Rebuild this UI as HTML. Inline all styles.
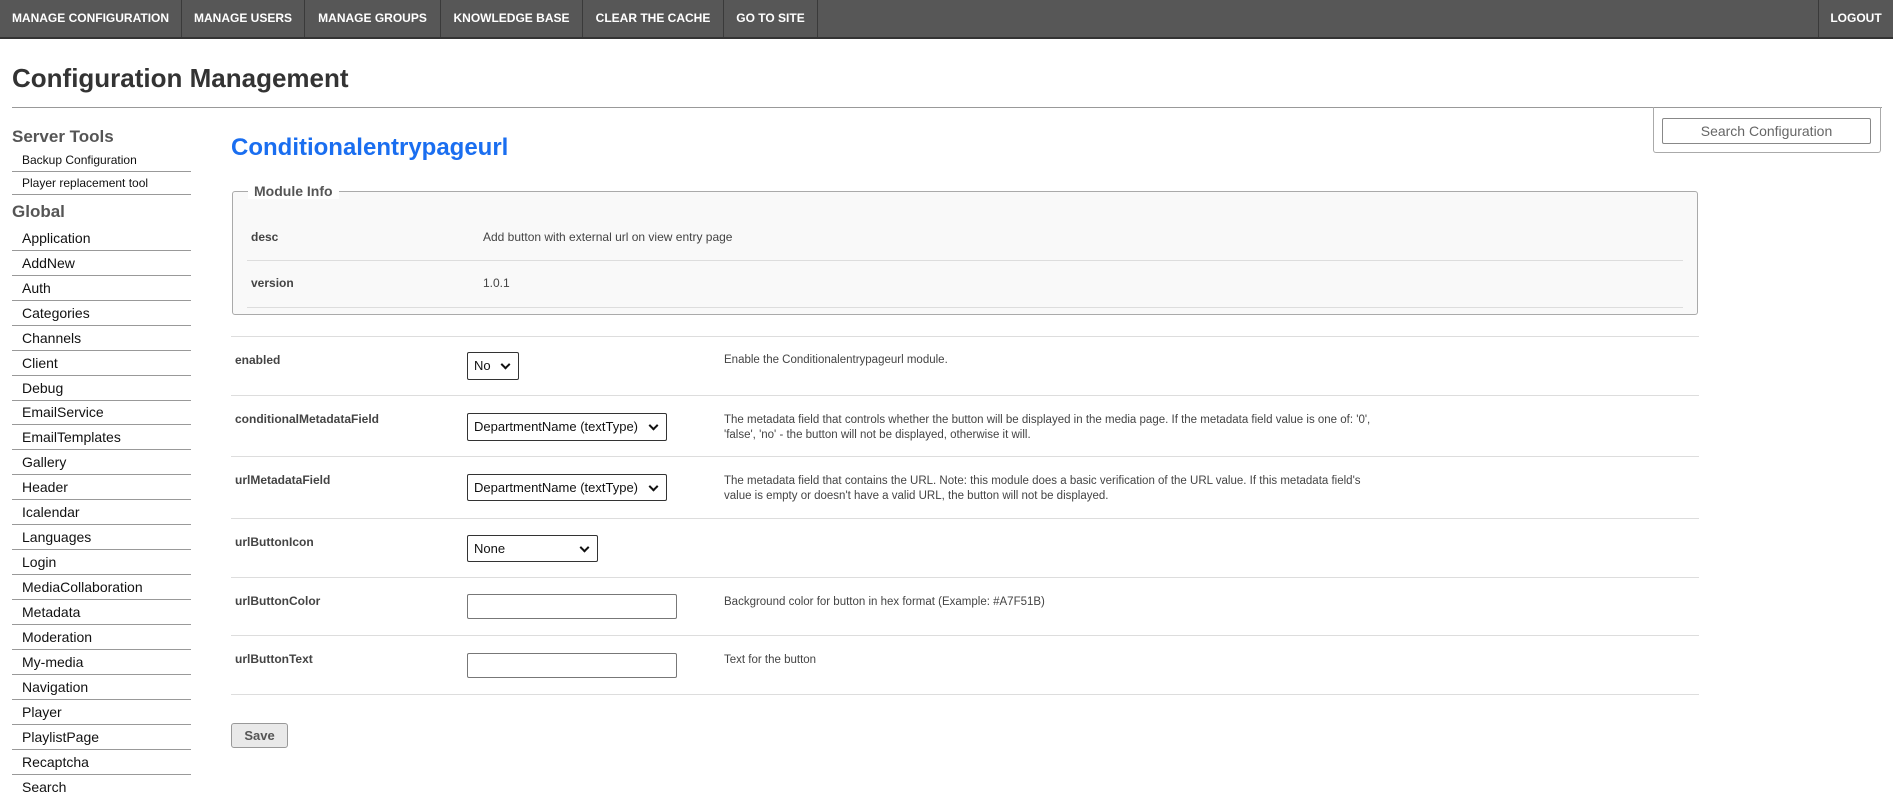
<!DOCTYPE html>
<html><head><meta charset="utf-8"><style>
*{box-sizing:border-box;margin:0;padding:0}
body{width:1893px;height:785px;overflow:hidden;background:#fff;font-family:"Liberation Sans",Arial,sans-serif;color:#333;position:relative}
.nav{position:absolute;left:0;top:0;width:1893px;height:39px;background:#575757;border-bottom:2px solid #333}
.nav a{position:absolute;top:0;height:37px;line-height:37px;color:#fff;font-size:12px;font-weight:bold;text-align:center;border-right:1px solid #3a3a3a}
.ab{position:absolute;white-space:nowrap}
.side{position:absolute;left:12px;width:179px}
.si{position:absolute;left:0;width:179px;border-bottom:1px solid #999;font-size:14px;color:#111;padding-left:10px}
.line{position:absolute;height:1px;background:#ddd}
.lab{position:absolute;left:235px;font-size:12px;font-weight:bold;color:#444}
.desc{position:absolute;left:724px;width:680px;font-size:11.5px;color:#444;line-height:15px}
.sel{position:absolute;left:467px;border:1px solid #333;border-radius:2px;background:#fff;font-size:13px;color:#111;padding-left:6px}
.sel:after{content:"";position:absolute;right:9px;top:50%;width:5px;height:5px;border-right:2px solid #111;border-bottom:2px solid #111;transform:translateY(-70%) rotate(45deg)}
.inp{position:absolute;left:467px;width:210px;height:25px;border:1px solid #777;border-radius:2px}
</style></head><body>
<div class="nav">
<a style="left:0;width:182px">MANAGE CONFIGURATION</a>
<a style="left:182px;width:123px">MANAGE USERS</a>
<a style="left:305px;width:136px">MANAGE GROUPS</a>
<a style="left:441px;width:142px">KNOWLEDGE BASE</a>
<a style="left:583px;width:141px">CLEAR THE CACHE</a>
<a style="left:724px;width:94px">GO TO SITE</a>
<a style="left:1818px;width:75px;border-right:0;border-left:1px solid #3a3a3a">LOGOUT</a>
</div>
<div class="ab" style="left:12px;top:63px;font-size:26px;font-weight:bold;color:#333">Configuration Management</div>
<div class="ab" style="left:12px;top:107px;width:1870px;height:1px;background:#999"></div>
<div class="ab" style="left:1653px;top:107px;width:228px;height:46px;border:1px solid #aaa;border-top:0;border-radius:0 0 3px 3px"></div>
<div class="ab" style="left:1662px;top:118px;width:209px;height:26px;border:1px solid #888;border-radius:2px;font-size:14px;color:#666;text-align:center;line-height:24px">Search Configuration</div>

<div class="side" style="top:0">
<div class="ab" style="left:0;top:127px;font-size:17px;font-weight:bold;color:#555">Server Tools</div>
<div class="si" style="top:149px;height:23px;line-height:22px;font-size:12px">Backup Configuration</div>
<div class="si" style="top:172px;height:23px;line-height:22px;font-size:12px">Player replacement tool</div>
<div class="ab" style="left:0;top:202px;font-size:17px;font-weight:bold;color:#555">Global</div>
<div class="si" style="top:226px;height:25px;line-height:24px">Application</div>
<div class="si" style="top:251px;height:25px;line-height:24px">AddNew</div>
<div class="si" style="top:276px;height:25px;line-height:24px">Auth</div>
<div class="si" style="top:301px;height:25px;line-height:24px">Categories</div>
<div class="si" style="top:326px;height:25px;line-height:24px">Channels</div>
<div class="si" style="top:351px;height:25px;line-height:24px">Client</div>
<div class="si" style="top:376px;height:25px;line-height:24px">Debug</div>
<div class="si" style="top:400px;height:25px;line-height:24px">EmailService</div>
<div class="si" style="top:425px;height:25px;line-height:24px">EmailTemplates</div>
<div class="si" style="top:450px;height:25px;line-height:24px">Gallery</div>
<div class="si" style="top:475px;height:25px;line-height:24px">Header</div>
<div class="si" style="top:500px;height:25px;line-height:24px">Icalendar</div>
<div class="si" style="top:525px;height:25px;line-height:24px">Languages</div>
<div class="si" style="top:550px;height:25px;line-height:24px">Login</div>
<div class="si" style="top:575px;height:25px;line-height:24px">MediaCollaboration</div>
<div class="si" style="top:600px;height:25px;line-height:24px">Metadata</div>
<div class="si" style="top:625px;height:25px;line-height:24px">Moderation</div>
<div class="si" style="top:650px;height:25px;line-height:24px">My-media</div>
<div class="si" style="top:675px;height:25px;line-height:24px">Navigation</div>
<div class="si" style="top:700px;height:25px;line-height:24px">Player</div>
<div class="si" style="top:725px;height:25px;line-height:24px">PlaylistPage</div>
<div class="si" style="top:750px;height:25px;line-height:24px">Recaptcha</div>
<div class="si" style="top:775px;height:25px;line-height:24px;border:0">Search</div>
</div>

<div class="ab" style="left:231px;top:134px;font-size:24px;font-weight:bold;color:#1a6ef0">Conditionalentrypageurl</div>
<div class="ab" style="left:232px;top:191px;width:1466px;height:124px;border:1px solid #aaa;border-radius:3px;background:#f9f9f9"></div>
<div class="ab" style="left:248px;top:183px;padding:0 6px;background:#fff;font-size:14px;font-weight:bold;color:#555">Module Info</div>
<div class="ab" style="left:251px;top:230px;font-size:12px;font-weight:bold;color:#444">desc</div>
<div class="ab" style="left:483px;top:230px;font-size:12px;color:#444">Add button with external url on view entry page</div>
<div class="line" style="left:247px;top:260px;width:1436px"></div>
<div class="ab" style="left:251px;top:276px;font-size:12px;font-weight:bold;color:#444">version</div>
<div class="ab" style="left:483px;top:276px;font-size:12px;color:#444">1.0.1</div>
<div class="line" style="left:247px;top:307px;width:1436px"></div>

<div class="line" style="left:231px;top:336px;width:1468px"></div>
<div class="line" style="left:231px;top:395px;width:1468px"></div>
<div class="line" style="left:231px;top:456px;width:1468px"></div>
<div class="line" style="left:231px;top:518px;width:1468px"></div>
<div class="line" style="left:231px;top:577px;width:1468px"></div>
<div class="line" style="left:231px;top:635px;width:1468px"></div>
<div class="line" style="left:231px;top:694px;width:1468px"></div>

<div class="lab" style="top:353px">enabled</div>
<div class="sel" style="top:352px;width:52px;height:28px;line-height:26px">No</div>
<div class="desc" style="top:353px">Enable the Conditionalentrypageurl module.</div>

<div class="lab" style="top:412px">conditionalMetadataField</div>
<div class="sel" style="top:413px;width:200px;height:28px;line-height:26px">DepartmentName (textType)</div>
<div class="desc" style="top:413px">The metadata field that controls whether the button will be displayed in the media page. If the metadata field value is one of: '0',<br>'false', 'no' - the button will not be displayed, otherwise it will.</div>

<div class="lab" style="top:473px">urlMetadataField</div>
<div class="sel" style="top:474px;width:200px;height:27px;line-height:25px">DepartmentName (textType)</div>
<div class="desc" style="top:474px">The metadata field that contains the URL. Note: this module does a basic verification of the URL value. If this metadata field's<br>value is empty or doesn't have a valid URL, the button will not be displayed.</div>

<div class="lab" style="top:535px">urlButtonIcon</div>
<div class="sel" style="top:535px;width:131px;height:27px;line-height:25px">None</div>

<div class="lab" style="top:594px">urlButtonColor</div>
<div class="inp" style="top:594px"></div>
<div class="desc" style="top:595px">Background color for button in hex format (Example: #A7F51B)</div>

<div class="lab" style="top:652px">urlButtonText</div>
<div class="inp" style="top:653px"></div>
<div class="desc" style="top:653px">Text for the button</div>

<div class="ab" style="left:231px;top:723px;width:57px;height:25px;border:1px solid #999;border-radius:3px;background:#e9e9e9;font-size:13px;font-weight:bold;color:#555;text-align:center;line-height:23px">Save</div>
</body></html>
